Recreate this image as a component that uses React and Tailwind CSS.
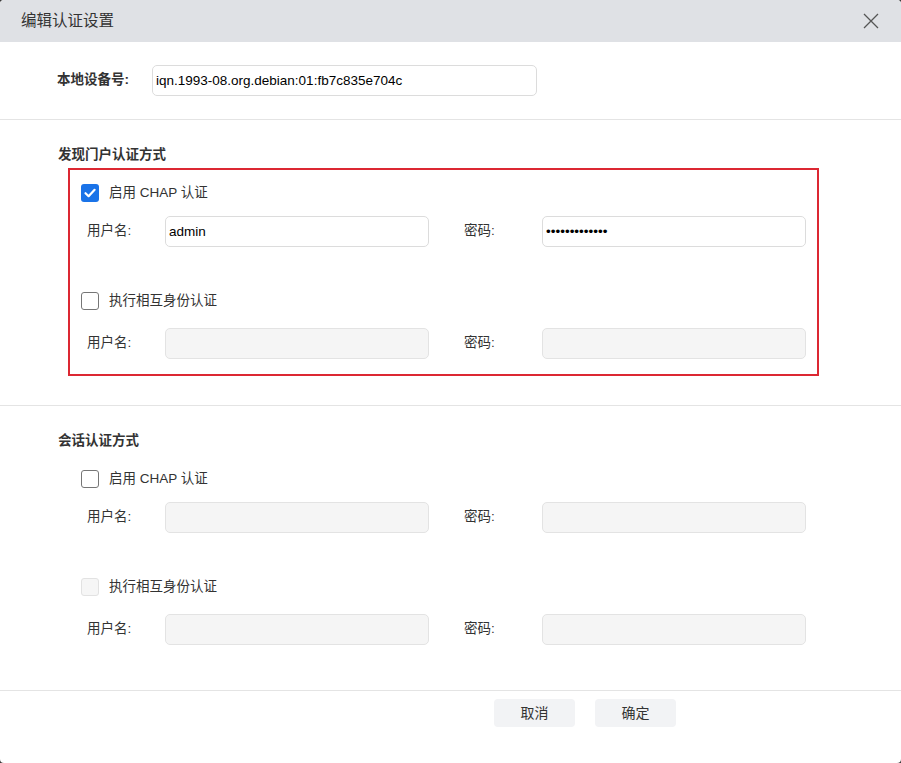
import { useState } from "react";

const font = { fontFamily: '"Liberation Sans", Arial, "Noto Sans CJK SC", sans-serif' };

const Checkbox = ({ checked, disabled, onChange }) => {
  if (checked) {
    return (
      <button
        type="button"
        onClick={onChange}
        className="w-[18px] h-[18px] rounded-[3px] bg-[#1a73e8] flex items-center justify-center shrink-0"
      >
        <svg width="14" height="14" viewBox="0 0 14 14" fill="none">
          <path d="M2.5 7.2 L5.6 10.2 L11.6 3.8" stroke="#fff" strokeWidth="2.2" strokeLinecap="round" strokeLinejoin="round" />
        </svg>
      </button>
    );
  }
  return (
    <button
      type="button"
      onClick={disabled ? undefined : onChange}
      className={
        disabled
          ? "w-[18px] h-[18px] rounded-[3px] border border-[#e2e2e2] bg-[#f6f6f6] shrink-0"
          : "w-[18px] h-[18px] rounded-[3px] border border-[#767676] bg-white shrink-0"
      }
    />
  );
};

const Field = ({ value, type = "text", disabled, width }) => (
  <input
    type={type}
    value={value}
    readOnly
    disabled={disabled}
    style={font}
    className={
      (disabled
        ? "bg-[#f5f5f5] border-[#e3e3e3] "
        : "bg-white border-[#dcdcdc] ") +
      width +
      " h-[31px] rounded-[5px] border px-[3px] text-[13.5px] text-black outline-none"
    }
  />
);

const CredRow = ({ user, pass, disabled }) => (
  <div className="flex items-center pl-[17px]">
    <span className="w-[78px] text-[13.5px] text-[#333]">用户名:</span>
    <Field value={user} disabled={disabled} width="w-[264px]" />
    <span className="w-[78px] ml-[35px] text-[13.5px] text-[#333]">密码:</span>
    <Field value={pass} type="password" disabled={disabled} width="w-[264px]" />
  </div>
);

const AuthBlock = ({ title, highlight, chap, setChap, mutual, setMutual, user, pass, last }) => (
  <div className={(last ? "pb-[28px]" : "pb-[29px]") + " pt-[25px] border-b border-[#e4e4e4]"}>
    <div className="pl-[58px] h-[20px] leading-[20px] text-[13.5px] font-bold text-[#333]">{title}</div>
    <div
      className={
        (highlight ? "border-[#dc2832] " : "border-transparent ") +
        "mt-[3px] ml-[68px] w-[751px] border-2 pt-[14px] pb-[15px] pr-[11px]"
      }
    >
      <div className="flex items-center gap-[10px] pl-[11px] h-[18px]">
        <Checkbox checked={chap} onChange={() => setChap(!chap)} />
        <span className="text-[13.5px] text-[#333]">启用 CHAP 认证</span>
      </div>
      <div className="mt-[14px]">
        <CredRow user={chap ? user : ""} pass={chap ? pass : ""} disabled={!chap} />
      </div>
      <div className="flex items-center gap-[10px] pl-[11px] h-[18px] mt-[45px]">
        <Checkbox checked={mutual} disabled={!chap} onChange={() => setMutual(!mutual)} />
        <span className="text-[13.5px] text-[#333]">执行相互身份认证</span>
      </div>
      <div className="mt-[18px]">
        <CredRow user="" pass="" disabled={!mutual} />
      </div>
    </div>
  </div>
);

export default function App() {
  const [chap1, setChap1] = useState(true);
  const [mutual1, setMutual1] = useState(false);
  const [chap2, setChap2] = useState(false);
  const [mutual2, setMutual2] = useState(false);

  return (
    <div className="w-[901px] h-[763px] bg-[#3a3a3a] overflow-hidden" style={font}>
      <div className="h-[763px] bg-white rounded-[4px] overflow-hidden flex flex-col">
        <div className="h-[42px] bg-[#dfe1e5] flex items-center justify-between pl-[21px] pr-[22px] shrink-0">
          <span className="text-[15.5px] text-[#333]">编辑认证设置</span>
          <svg width="16" height="16" viewBox="0 0 16 16" fill="none">
            <path d="M1 1 L15 15 M15 1 L1 15" stroke="#555" strokeWidth="1.3" />
          </svg>
        </div>

        <div className="flex items-center pl-[57px] pt-[23px] pb-[23px] border-b border-[#e4e4e4]">
          <span className="w-[95px] text-[13.5px] font-bold text-[#333]">本地设备号:</span>
          <Field value="iqn.1993-08.org.debian:01:fb7c835e704c" width="w-[385px]" />
        </div>

        <AuthBlock
          title="发现门户认证方式"
          highlight
          chap={chap1}
          setChap={setChap1}
          mutual={mutual1}
          setMutual={setMutual1}
          user="admin"
          pass="•••••••••••••"
        />
        <AuthBlock
          title="会话认证方式"
          last
          chap={chap2}
          setChap={setChap2}
          mutual={mutual2}
          setMutual={setMutual2}
          user=""
          pass=""
        />

        <div className="flex justify-end gap-[20px] pr-[225px] pt-[8px]">
          <button className="w-[81px] h-[28px] rounded-[4px] bg-[#f2f3f5] text-[14px] text-[#333]">取消</button>
          <button className="w-[81px] h-[28px] rounded-[4px] bg-[#f2f3f5] text-[14px] text-[#333]">确定</button>
        </div>
      </div>
    </div>
  );
}
